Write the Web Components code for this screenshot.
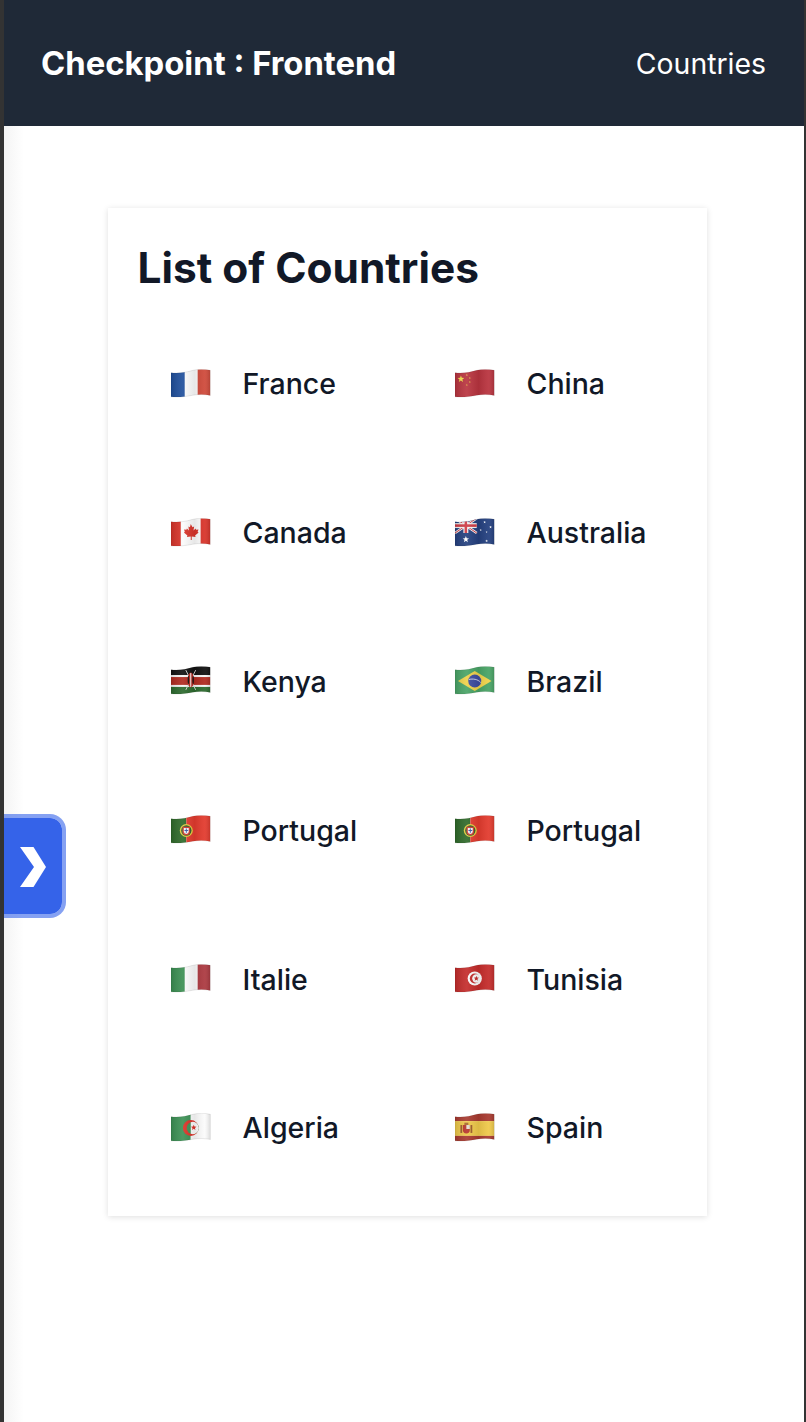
<!DOCTYPE html>
<html lang="en">
<head>
<meta charset="utf-8">
<title>Checkpoint : Frontend</title>
<style>
  html, body { margin: 0; height: 100%; background: #333; overflow: hidden; }
  body { font-family: Inter, "Liberation Sans", sans-serif; }
</style>
</head>
<body>
<app-shell>
  <top-nav slot="nav" brand="Checkpoint : Frontend" link="Countries"></top-nav>
  <side-toggle slot="toggle"></side-toggle>
  <country-card title-text="List of Countries">
    <country-item code="fr">France</country-item>
    <country-item code="cn">China</country-item>
    <country-item code="ca">Canada</country-item>
    <country-item code="au">Australia</country-item>
    <country-item code="ke">Kenya</country-item>
    <country-item code="br">Brazil</country-item>
    <country-item code="pt">Portugal</country-item>
    <country-item code="pt">Portugal</country-item>
    <country-item code="it">Italie</country-item>
    <country-item code="tn">Tunisia</country-item>
    <country-item code="dz">Algeria</country-item>
    <country-item code="es">Spain</country-item>
  </country-card>
</app-shell>

<script>
  (function() {
    let rect = (x, y, w, h, fill) => `<rect x="${x}" y="${y}" width="${w}" height="${h}" fill="${fill}"/>`;
    let dot = (x, y, r, fill) => `<circle cx="${x}" cy="${y}" r="${r}" fill="${fill}"/>`;
    let star = (x, y, r, fill) => {
      let pts = [];
      for (let i = 0; i < 10; i++) {
        let a = -Math.PI / 2 + i * Math.PI / 5;
        let d = i % 2 ? r * 0.42 : r;
        pts.push((x + d * Math.cos(a)).toFixed(2) + ',' + (y + d * Math.sin(a)).toFixed(2));
      }
      return `<polygon points="${pts.join(' ')}" fill="${fill}"/>`;
    };

    let flags = {
      fr: rect(0, 0, 14, 30, '#1f4f9c') + rect(14, 0, 13, 30, '#fbfbfb') + rect(27, 0, 13, 30, '#cf4a3b'),
      cn: rect(0, 0, 40, 30, '#b9343f') + star(6, 10, 3.6, '#f4e04d')
        + star(12, 6, 1, '#eed24a') + star(15, 9, 1, '#eed24a') + star(15, 13, 1, '#eed24a') + star(12, 16, 1, '#eed24a'),
      ca: rect(0, 0, 10, 30, '#d8342a') + rect(10, 0, 20, 30, '#fbfbfb') + rect(30, 0, 10, 30, '#d8342a')
        + '<path d="M20 6l1.8 3.2 1.6-.8-.6 4 2.1-2 .5 1.4 2.4-.4-.8 2.6 1 .6-3.6 3 .5 1.5-3.9-.6V22h-1v-3.5l-3.9.6.5-1.5-3.6-3 1-.6-.8-2.6 2.4.4.5-1.4 2.1 2-.6-4 1.6.8z" fill="#d8342a"/>',
      au: rect(0, 0, 40, 30, '#24407f')
        + '<path d="M0 0L22 15M22 0L0 15" stroke="#f6f6f6" stroke-width="2.6"/><path d="M0 0L22 15M22 0L0 15" stroke="#cf3a44" stroke-width="1"/>'
        + rect(0, 5, 22, 5, '#f6f6f6') + rect(8.5, 0, 5, 15, '#f6f6f6') + rect(0, 6.2, 22, 2.6, '#cf3a44') + rect(9.7, 0, 2.6, 15, '#cf3a44')
        + star(11, 21.5, 3.4, '#fff') + star(30, 4, 1.4, '#fff') + star(36, 9, 1.4, '#fff') + star(26, 12, 1.2, '#fff') + star(32, 14, 1, '#fff') + star(32, 23, 1.5, '#fff'),
      ke: rect(0, 0, 40, 9, '#111') + rect(0, 9, 40, 2, '#f5f5f5') + rect(0, 11, 40, 8, '#b02a20') + rect(0, 19, 40, 2, '#f5f5f5') + rect(0, 21, 40, 9, '#2c6a2e')
        + '<path d="M15 4L25 24M25 4L15 24" stroke="#ddd" stroke-width=".9"/>'
        + '<ellipse cx="20" cy="14" rx="3.2" ry="7.6" fill="#b02a20"/><path d="M20 7v14" stroke="#fff" stroke-width="1"/><ellipse cx="17.6" cy="14" rx=".7" ry="4" fill="#111"/><ellipse cx="22.4" cy="14" rx=".7" ry="4" fill="#111"/>',
      br: rect(0, 0, 40, 30, '#49a466') + '<polygon points="20,5 37,15 20,25 3,15" fill="#efd24a"/>' + dot(20, 15, 6.6, '#3c4ca0')
        + '<path d="M14 13.5c4-1 9-.5 12 3" stroke="#dfe3f5" stroke-width=".9" fill="none"/>',
      pt: rect(0, 0, 15.5, 30, '#2f6a2a') + rect(15.5, 0, 24.5, 30, '#e23b2e')
        + dot(15.5, 15.5, 6.6, '#e6cc3e') + dot(15.5, 15.5, 5.2, '#2f5f2a')
        + '<path d="M11.7 11.6h7.6v5a3.8 3.8 0 0 1-7.6 0z" fill="#d23a30"/><path d="M13 12.9h5v3.6a2.5 2.5 0 0 1-5 0z" fill="#f7f7f7"/>'
        + rect(15, 13.4, 1, 4.4, '#3d58a8') + rect(13.6, 15, 3.8, 1, '#3d58a8'),
      it: rect(0, 0, 14, 30, '#3b8f52') + rect(14, 0, 13, 30, '#fbfbfb') + rect(27, 0, 13, 30, '#ac3a41'),
      tn: rect(0, 0, 40, 30, '#c42c2b') + dot(20, 14.5, 7.2, '#fbfbfb') + dot(20, 14.5, 5, '#c42c2b') + dot(21.6, 14.5, 4.2, '#fbfbfb') + star(21.6, 14.5, 2.8, '#c42c2b'),
      dz: rect(0, 0, 20, 30, '#3c9155') + rect(20, 0, 20, 30, '#fbfbfb') + dot(20, 15, 8, '#dc3328') + dot(22, 15, 6.2, '#3c9155')
        + '<path d="M20 9.13A6.2 6.2 0 1 1 20 20.87Z" fill="#fbfbfb"/>' + star(23, 14.6, 3, '#dc3328'),
      es: rect(0, 0, 40, 8, '#a83a30') + rect(0, 8, 40, 15, '#efc94a') + rect(0, 23, 40, 7, '#a83a30')
        + '<rect x="5.5" y="12" width="1.8" height="8" fill="#9c5a2a"/><rect x="15.7" y="12" width="1.8" height="8" fill="#9c5a2a"/>'
        + '<path d="M8 12h7v5a3.5 3.5 0 0 1-7 0z" fill="#b8352c"/><rect x="9.5" y="9.6" width="4" height="2.4" fill="#a8682c"/><rect x="11.5" y="12" width="3.5" height="4" fill="#e6e0d0"/>'
    };

    // Flags are all laid on the same waving silhouette, shaded like the emoji
    class CountryFlag extends HTMLElement {
      connectedCallback() {
        let art = flags[this.getAttribute('code')] || '';
        let wave = 'M0 3.6C8 4.4 15 3.4 22 1.2 28-.4 34-.2 40 1.2V26.6C34 25.4 28 25.4 22 26.4 15 27.8 8 28.6 0 28Z';
        this.attachShadow({mode: 'open'}).innerHTML = `
          <style>
            :host { display: block; width: 40px; height: 30px; flex: none; }
            svg { display: block; }
          </style>
          <svg width="40" height="30" viewBox="0 0 40.5 30" aria-hidden="true">
            <defs>
              <clipPath id="wave"><path d="${wave}"/></clipPath>
              <linearGradient id="shade" x1="0" x2="1" y1="0" y2="0">
                <stop offset="0" stop-color="#000" stop-opacity=".12"/>
                <stop offset=".3" stop-color="#fff" stop-opacity=".08"/>
                <stop offset=".6" stop-color="#000" stop-opacity=".08"/>
                <stop offset=".85" stop-color="#fff" stop-opacity=".06"/>
                <stop offset="1" stop-color="#000" stop-opacity=".14"/>
              </linearGradient>
            </defs>
            <g clip-path="url(#wave)">${art}<rect width="40" height="30" fill="url(#shade)"/></g>
            <path d="${wave}" fill="none" stroke="#000" stroke-opacity=".14" stroke-width=".6"/>
          </svg>`;
      }
    }

    class CountryItem extends HTMLElement {
      connectedCallback() {
        this.attachShadow({mode: 'open'}).innerHTML = `
          <style>
            :host { display: flex; align-items: center; gap: 32px; color: #111827; font-size: 28.5px; font-weight: 500; }
          </style>
          <country-flag code="${this.getAttribute('code')}"></country-flag>
          <slot></slot>`;
      }
    }

    class CountryCard extends HTMLElement {
      connectedCallback() {
        this.attachShadow({mode: 'open'}).innerHTML = `
          <style>
            :host {
              display: block; width: 599px; box-sizing: border-box; padding: 30px 30px 14px;
              background: #fff; box-shadow: 0 1px 6px rgba(0, 0, 0, .13);
            }
            h2 { margin: 0 0 11.5px; font-size: 42.4px; line-height: 60px; font-weight: 700; color: #111827; }
            .grid { display: grid; grid-template-columns: 284px 1fr; grid-auto-rows: 148.8px; padding-left: 33px; align-items: center; }
          </style>
          <h2>${this.getAttribute('title-text')}</h2>
          <div class="grid"><slot></slot></div>`;
      }
    }

    class TopNav extends HTMLElement {
      connectedCallback() {
        this.attachShadow({mode: 'open'}).innerHTML = `
          <style>
            :host {
              display: flex; justify-content: space-between; align-items: center; height: 126px;
              padding: 0 38px 0 37px; background: #1f2937; color: #fff;
            }
            .brand { font-size: 32.8px; font-weight: 700; }
            .link { font-size: 28.4px; font-weight: 400; padding-top: 1px; }
          </style>
          <span class="brand">${this.getAttribute('brand')}</span>
          <span class="link">${this.getAttribute('link')}</span>`;
      }
    }

    class SideToggle extends HTMLElement {
      connectedCallback() {
        this.attachShadow({mode: 'open'}).innerHTML = `
          <style>
            :host {
              position: absolute; left: 0; top: 814px; width: 62px; height: 104px; box-sizing: border-box;
              display: flex; align-items: center;
              background: #3563e9; background-clip: padding-box;
              border: 4px solid rgba(53, 99, 233, .6); border-left: 0; border-radius: 0 16px 16px 0;
            }
            svg { display: block; margin: 2px 0 0 16px; }
          </style>
          <svg width="26" height="40" viewBox="0 0 26 40" aria-hidden="true">
            <polygon points="0,0 13.5,0 26,20 13.5,40 0,40 14,20" fill="#fff"/>
          </svg>`;
      }
    }

    class AppShell extends HTMLElement {
      connectedCallback() {
        this.attachShadow({mode: 'open'}).innerHTML = `
          <style>
            :host {
              display: block; position: relative; height: 1422px; margin: 0 2px 0 4px;
              background: linear-gradient(90deg, #f4f4f4, #fff 20px);
            }
            main { display: flex; justify-content: center; padding: 82px 0 0 6px; }
          </style>
          <slot name="nav"></slot>
          <slot name="toggle"></slot>
          <main><slot></slot></main>`;
      }
    }

    customElements.define('country-flag', CountryFlag);
    customElements.define('country-item', CountryItem);
    customElements.define('country-card', CountryCard);
    customElements.define('top-nav', TopNav);
    customElements.define('side-toggle', SideToggle);
    customElements.define('app-shell', AppShell);
  })();
</script>
</body>
</html>
